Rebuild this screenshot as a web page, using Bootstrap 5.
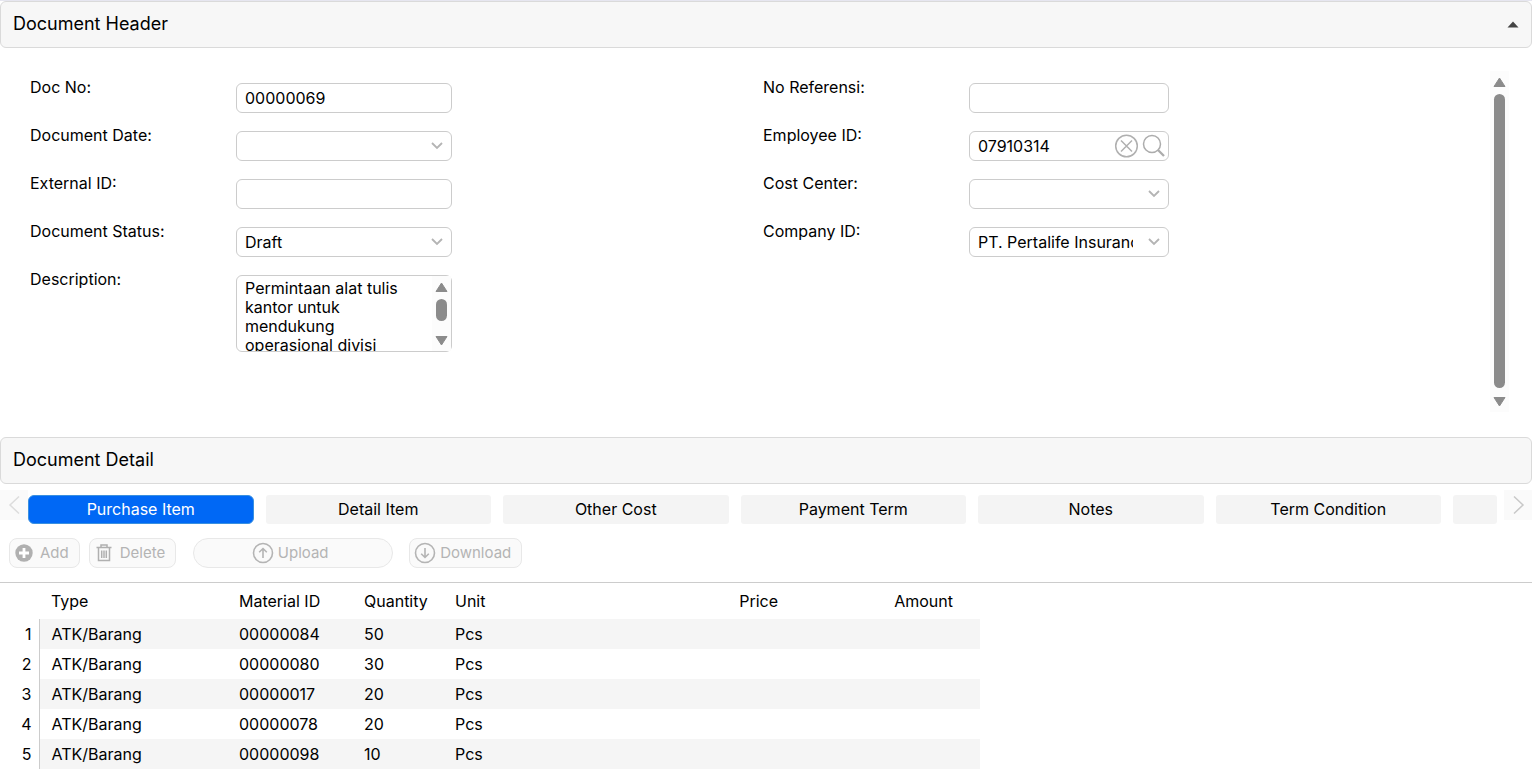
<!DOCTYPE html>
<html lang="id">
<head>
<meta charset="utf-8">
<meta name="viewport" content="width=device-width, initial-scale=1">
<title>Document</title>
<link href="https://cdn.jsdelivr.net/npm/bootstrap@5.3.0/dist/css/bootstrap.min.css" rel="stylesheet">
<style>
body{font-family:Inter,"Liberation Sans",sans-serif;font-size:16px;line-height:24px;color:#000;background:#fff;border-top:1px solid #e6e6f0}
.section-bar{height:47px;padding:0 12px;background:#f7f7f7;border:1px solid #dadada;border-radius:6px}
.section-bar h2{font-size:18px;line-height:24px;margin:0;padding-bottom:2px;font-weight:400}
.plain-btn{background:none;border:0;padding:0;line-height:0}
.form-panel{min-height:389px;padding:23px 23px 25px 24px}
.form-col{padding:4px 0 0 6px}
.field-row{display:flex;margin-bottom:10px}
.field-row label{width:206px;flex:none}
.field-box{margin-top:8px;width:216px;position:relative}
.form-end .field-box{width:200px}
.field-box .form-control,.field-box .form-select{height:30px;padding:0 8px;border:1px solid #ccc;border-radius:6px;font-size:16px;line-height:28px;color:#000;background-color:#fff}
.field-box .form-select{padding-right:35px;background-image:url("data:image/svg+xml,%3Csvg xmlns='http://www.w3.org/2000/svg' viewBox='0 0 12 8'%3E%3Cpath d='M1 1l5 5 5-5' fill='none' stroke='%23b4b4b4' stroke-width='1.8'/%3E%3C/svg%3E");background-size:12px 8px;background-position:right 8px center}
.field-box textarea.form-control{display:block;height:77px;padding:3px 34px 0 8px;line-height:19px;resize:none;overflow:hidden}
.box-icons{position:absolute;right:3px;top:2px;display:flex;gap:3px}
.scroll-track{width:19px;display:flex;flex-direction:column;align-items:center;background:#fcfcfc;padding:5px 0 4px}
.scroll-track svg{flex:none}
.scroll-thumb{background:#8b8b8b;border-radius:6px;width:11px;margin:6px 0 8px}
.text-scroll{position:absolute;right:1px;top:1px;bottom:1px}
.text-scroll .scroll-thumb{margin:6px 0 14px}
.tab-line{padding-top:6px}
.tab-arrow{width:28px;height:30px;background:#fafafa;flex:none}
.tab-strip{display:grid;grid-template-columns:repeat(6,minmax(0,1fr)) 44px;gap:12px;padding-top:5px;margin-right:7px}
.tab-strip button{height:29px;border:0;border-radius:3px;background:#f4f4f4;color:#000;padding:0 4px 2px;line-height:24px;white-space:nowrap;overflow:hidden}
.tab-strip .active{background:#0068f5;color:#fff;border-radius:6px;border:1px solid #3990e0}
.tool-row{padding:14px 9px}
.tool-row .btn{height:30px;padding:0 10px 0 4px;border:1px solid #e8e8e8;border-radius:8px;background:#fafafa;color:#b4b4b4;font-size:15px;line-height:28px;display:flex;align-items:center;gap:6px;opacity:1}
.tool-row .btn:first-child{margin-right:9px}
.tool-row .upload-btn{width:200px;border-radius:15px;justify-content:center;margin:0 16px 0 17px}
.tool-row .round-icon{gap:4px}
.grid-area{border-top:1px solid #ccc;min-height:199px}
.item-grid{width:980px;table-layout:fixed;margin:0;color:#000}
.item-grid th,.item-grid td{font-weight:400;height:30px;padding:0 0 0 12px;line-height:24px}
.item-grid thead th{height:36px}
.item-grid tbody th{text-align:right;padding:0 7px 0 0;border-right:1px solid #ccc}
.item-grid tbody tr:nth-child(odd) td{background:#f5f5f5}
.item-grid .num{text-align:right;padding-right:27px}
</style>
</head>
<body>
<section>
  <div class="section-bar d-flex align-items-center justify-content-between">
    <h2>Document Header</h2>
    <button class="plain-btn" type="button" aria-label="Collapse"><svg width="12" height="7" viewBox="0 0 12 7"><path d="M6 0.500L11.500 6.500H.5z" fill="#444"/></svg></button>
  </div>
  <form class="form-panel d-flex">
    <div class="row g-0 flex-grow-1">
      <div class="col-6 form-col">
        <div class="field-row"><label for="docno">Doc No:</label><div class="field-box"><input id="docno" class="form-control" value="00000069"></div></div>
        <div class="field-row"><label for="docdate">Document Date:</label><div class="field-box"><select id="docdate" class="form-select"><option></option></select></div></div>
        <div class="field-row"><label for="extid">External ID:</label><div class="field-box"><input id="extid" class="form-control"></div></div>
        <div class="field-row"><label for="status">Document Status:</label><div class="field-box"><select id="status" class="form-select"><option>Draft</option></select></div></div>
        <div class="field-row"><label for="desc">Description:</label><div class="field-box"><textarea id="desc" class="form-control">Permintaan alat tulis kantor untuk mendukung operasional divisi</textarea>
          <div class="scroll-track text-scroll"><svg width="13" height="12" viewBox="0 0 13 12"><path d="M6.500 2L12 10.500H1z" fill="#8b8b8b" stroke="#8b8b8b" stroke-linejoin="round"/></svg><div class="scroll-thumb flex-grow-1"></div><svg width="13" height="12" viewBox="0 0 13 12"><path d="M1 1.500h11L6.500 10z" fill="#8b8b8b" stroke="#8b8b8b" stroke-linejoin="round"/></svg></div>
        </div></div>
      </div>
      <div class="col-6 form-col form-end">
        <div class="field-row"><label for="ref">No Referensi:</label><div class="field-box"><input id="ref" class="form-control"></div></div>
        <div class="field-row"><label for="emp">Employee ID:</label><div class="field-box"><input id="emp" class="form-control" value="07910314">
          <div class="box-icons">
            <button class="plain-btn" type="button" aria-label="Clear"><svg width="25" height="26" viewBox="0 0 25 26" fill="none" stroke="#b0b0b0" stroke-width="1.500"><circle cx="12.500" cy="13" r="10.800"/><path d="M7 7.500l11 11M18 7.500l-11 11"/></svg></button>
            <button class="plain-btn" type="button" aria-label="Search"><svg width="24" height="26" viewBox="0 0 24 26" fill="none" stroke="#acacac"><circle cx="10" cy="11" r="8.500" stroke-width="1.500"/><path d="M16 17l6 6" stroke-width="2.300"/></svg></button>
          </div></div></div>
        <div class="field-row"><label for="cost">Cost Center:</label><div class="field-box"><select id="cost" class="form-select"><option></option></select></div></div>
        <div class="field-row"><label for="company">Company ID:</label><div class="field-box"><select id="company" class="form-select"><option>PT. Pertalife Insurance</option></select></div></div>
      </div>
    </div>
    <div class="scroll-track"><svg width="13" height="12" viewBox="0 0 13 12"><path d="M6.500 2L12 10.500H1z" fill="#8b8b8b" stroke="#8b8b8b" stroke-linejoin="round"/></svg><div class="scroll-thumb flex-grow-1"></div><svg width="13" height="12" viewBox="0 0 13 12"><path d="M1 1.500h11L6.500 10z" fill="#8b8b8b" stroke="#8b8b8b" stroke-linejoin="round"/></svg></div>
  </form>
</section>
<section>
  <div class="section-bar d-flex align-items-center"><h2>Document Detail</h2></div>
  <div class="tab-line d-flex">
    <button class="plain-btn tab-arrow" type="button" aria-label="Previous tabs"><svg width="14" height="20" viewBox="0 0 14 20"><path d="M12 1.500L3 10l9 8.500" fill="none" stroke="#ddd" stroke-width="1.500"/></svg></button>
    <div class="tab-strip flex-grow-1">
      <button class="active" type="button">Purchase Item</button>
      <button type="button">Detail Item</button>
      <button type="button">Other Cost</button>
      <button type="button">Payment Term</button>
      <button type="button">Notes</button>
      <button type="button">Term Condition</button>
      <button type="button" aria-label="More"></button>
    </div>
    <button class="plain-btn tab-arrow" type="button" aria-label="Next tabs"><svg width="14" height="20" viewBox="0 0 14 20"><path d="M3 1.500L12 10l-9 8.500" fill="none" stroke="#c8c8c8" stroke-width="1.500"/></svg></button>
  </div>
  <div class="tool-row d-flex">
    <button class="btn" type="button" disabled><svg width="20" height="20" viewBox="0 0 20 20"><circle cx="10" cy="10" r="8.700" fill="#b0b0b0"/><path d="M10 5v10M5 10h10" stroke="#fff" stroke-width="2.800"/></svg>Add</button>
    <button class="btn" type="button" disabled><svg width="20" height="20" viewBox="0 0 20 20" fill="none" stroke="#b0b0b0" stroke-width="1.500"><path d="M2.500 4.500h15M7 4V2h6v2M4.500 5v12.500h11V5M7.700 7.500v7.500M10 7.500v7.500M12.300 7.500v7.500"/></svg>Delete</button>
    <button class="btn upload-btn round-icon" type="button" disabled><svg width="22" height="22" viewBox="0 0 22 22" fill="none" stroke="#b4b4b4" stroke-width="1.600"><circle cx="11" cy="11" r="9.500"/><path d="M11 16V6.500M7.200 10.200L11 6.500l3.800 3.700"/></svg>Upload</button>
    <button class="btn round-icon" type="button" disabled><svg width="22" height="22" viewBox="0 0 22 22" fill="none" stroke="#b4b4b4" stroke-width="1.600"><circle cx="11" cy="11" r="9.500"/><path d="M11 6v9.500M7.200 11.800l3.800 3.700 3.800-3.700"/></svg>Download</button>
  </div>
  <div class="grid-area">
    <table class="item-grid">
      <colgroup><col style="width:39px"><col style="width:188px"><col style="width:125px"><col style="width:91px"><col style="width:187px"><col style="width:175px"><col style="width:175px"></colgroup>
      <thead><tr><th></th><th scope="col">Type</th><th scope="col">Material ID</th><th scope="col">Quantity</th><th scope="col">Unit</th><th scope="col" class="num">Price</th><th scope="col" class="num">Amount</th></tr></thead>
      <tbody>
        <tr><th scope="row">1</th><td>ATK/Barang</td><td>00000084</td><td>50</td><td>Pcs</td><td></td><td></td></tr>
        <tr><th scope="row">2</th><td>ATK/Barang</td><td>00000080</td><td>30</td><td>Pcs</td><td></td><td></td></tr>
        <tr><th scope="row">3</th><td>ATK/Barang</td><td>00000017</td><td>20</td><td>Pcs</td><td></td><td></td></tr>
        <tr><th scope="row">4</th><td>ATK/Barang</td><td>00000078</td><td>20</td><td>Pcs</td><td></td><td></td></tr>
        <tr><th scope="row">5</th><td>ATK/Barang</td><td>00000098</td><td>10</td><td>Pcs</td><td></td><td></td></tr>
      </tbody>
    </table>
  </div>
</section>
<script src="https://cdn.jsdelivr.net/npm/bootstrap@5.3.0/dist/js/bootstrap.bundle.min.js"></script>
</body>
</html>
